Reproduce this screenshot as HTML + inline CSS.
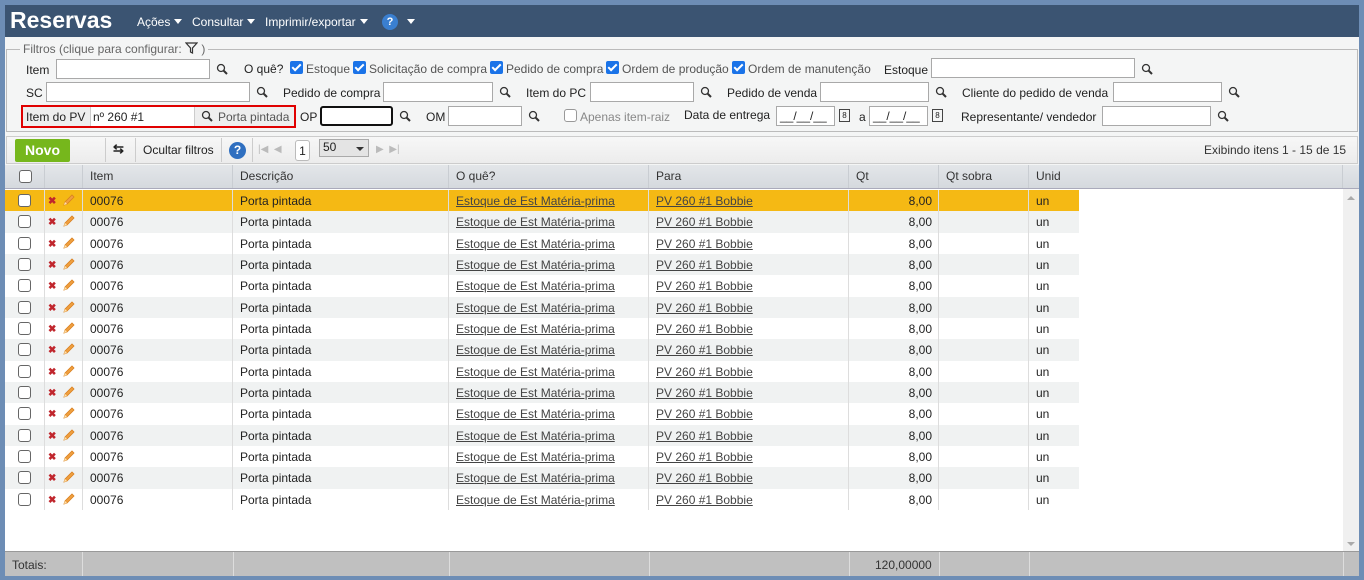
<!DOCTYPE html>
<html><head><meta charset="utf-8"><style>
*{box-sizing:border-box;margin:0;padding:0}
body{width:1364px;height:580px;background:#6d8db5;font-family:"Liberation Sans",sans-serif;font-size:12px;color:#222;position:relative;overflow:hidden}
.a{position:absolute}
#main{left:5px;top:5px;width:1354px;height:571px;background:#f4f5f5}
#hdr{left:5px;top:5px;width:1354px;height:32px;background:#3b5472;color:#fff}
.menu{position:absolute;top:10px;font-size:12px;color:#fff}
.tri{display:inline-block;width:0;height:0;border-left:4px solid transparent;border-right:4px solid transparent;border-top:5px solid #fff;vertical-align:2px;margin-left:4px}
.inp{position:absolute;height:20px;background:#fff;border:1px solid #a9a9a9}
.lbl{position:absolute;font-size:12px;color:#222}
.mag{position:absolute;width:12px;height:12px}
.cb{position:absolute;width:13px;height:13px;background:#1a73e8;border-radius:2px}
.cb:after{content:"";position:absolute;left:4px;top:1px;width:3px;height:7px;border:solid #fff;border-width:0 2px 2px 0;transform:rotate(45deg)}
.cbt{position:absolute;font-size:12px;color:#555}
.row{position:absolute;left:5px;width:1074px;height:21.33px}
.row div{position:absolute;top:0;height:100%;line-height:22px;border-right:1px solid #ddd}
.ch{position:absolute;width:13px;height:13px;border:1px solid #666;border-radius:3px;background:#fff}
a{color:#444;text-decoration:underline}
.hc{position:absolute;top:0;height:23px;line-height:23px;border-right:1px solid #c9cdd2;padding-left:7px;color:#333}
</style></head><body>
<div id="main" class="a"></div>
<div id="hdr" class="a">
<div class="a" style="left:5px;top:2px;font-size:23px;font-weight:bold;">Reservas</div>
<div class="menu" style="left:132px">Ações<span class="tri"></span></div>
<div class="menu" style="left:187px">Consultar<span class="tri"></span></div>
<div class="menu" style="left:260px">Imprimir/exportar<span class="tri"></span></div>
<div class="a" style="left:377px;top:9px;width:16px;height:16px;border-radius:50%;background:#3a7fd0;color:#fff;font-size:11px;font-weight:bold;text-align:center;line-height:16px">?</div>
<div class="a" style="left:402px;top:14px;border-left:4px solid transparent;border-right:4px solid transparent;border-top:5px solid #fff"></div>
</div>
<div class="a" style="left:6px;top:49px;width:1352px;height:83px;border:1px solid #bbb"></div>
<div class="a" style="left:20px;top:42px;background:#f4f5f5;padding:0 3px;color:#666;font-size:12px">Filtros (clique para configurar: <svg width="13" height="12" viewBox="0 0 13 12" style="vertical-align:-1px"><path d="M1 1H12L7.5 6V11L5.5 10V6Z" fill="none" stroke="#333" stroke-width="1.2"/></svg> )</div>
<svg width="0" height="0" style="position:absolute"><defs><g id="m"><circle cx="5" cy="5" r="3.5" fill="none" stroke="#333" stroke-width="1.3"/><path d="M7.5 7.5L11 11" stroke="#333" stroke-width="2"/></g>
<g id="p"><path d="M2 12L3 9L10 2L12 4L5 11Z" fill="#f0a040" stroke="#d98020" stroke-width="0.8"/><path d="M2 12L3 9L5 11Z" fill="#fde3b0"/></g></defs></svg>
<div class="lbl" style="left:26px;top:63px">Item</div>
<div class="inp" style="left:56px;top:59px;width:154px"></div>
<svg class="mag" style="left:216px;top:63px"><use href="#m"/></svg>
<div class="lbl" style="left:244px;top:62px">O quê?</div>
<div class="cb" style="left:290px;top:61px"></div><div class="cbt" style="left:306px;top:62px">Estoque</div>
<div class="cb" style="left:353px;top:61px"></div><div class="cbt" style="left:369px;top:62px">Solicitação de compra</div>
<div class="cb" style="left:490px;top:61px"></div><div class="cbt" style="left:506px;top:62px">Pedido de compra</div>
<div class="cb" style="left:606px;top:61px"></div><div class="cbt" style="left:622px;top:62px">Ordem de produção</div>
<div class="cb" style="left:732px;top:61px"></div><div class="cbt" style="left:748px;top:62px">Ordem de manutenção</div>
<div class="lbl" style="left:884px;top:63px">Estoque</div>
<div class="inp" style="left:931px;top:58px;width:204px"></div>
<svg class="mag" style="left:1141px;top:63px"><use href="#m"/></svg>
<div class="lbl" style="left:26px;top:86px">SC</div>
<div class="inp" style="left:46px;top:82px;width:204px"></div>
<svg class="mag" style="left:256px;top:86px"><use href="#m"/></svg>
<div class="lbl" style="left:283px;top:86px">Pedido de compra</div>
<div class="inp" style="left:383px;top:82px;width:110px"></div>
<svg class="mag" style="left:499px;top:86px"><use href="#m"/></svg>
<div class="lbl" style="left:526px;top:86px">Item do PC</div>
<div class="inp" style="left:590px;top:82px;width:104px"></div>
<svg class="mag" style="left:700px;top:86px"><use href="#m"/></svg>
<div class="lbl" style="left:727px;top:86px">Pedido de venda</div>
<div class="inp" style="left:820px;top:82px;width:109px"></div>
<svg class="mag" style="left:935px;top:86px"><use href="#m"/></svg>
<div class="lbl" style="left:962px;top:86px">Cliente do pedido de venda</div>
<div class="inp" style="left:1113px;top:82px;width:109px"></div>
<svg class="mag" style="left:1228px;top:86px"><use href="#m"/></svg>
<div class="a" style="left:21px;top:105px;width:275px;height:23px;border:2px solid #e00000;background:#eee"></div>
<div class="lbl" style="left:26px;top:110px">Item do PV</div>
<div class="a" style="left:90px;top:107px;width:105px;height:19px;background:#fff;border-left:1px solid #ccc;border-right:1px solid #ccc;padding:3px 2px">nº 260 #1</div>
<svg class="mag" style="left:201px;top:110px"><use href="#m"/></svg>
<div class="lbl" style="left:218px;top:110px;color:#555">Porta pintada</div>
<div class="lbl" style="left:300px;top:110px">OP</div>
<div class="a" style="left:320px;top:106px;width:73px;height:20px;border:2px solid #111;border-radius:3px;background:#fff"></div>
<svg class="mag" style="left:399px;top:110px"><use href="#m"/></svg>
<div class="lbl" style="left:426px;top:110px">OM</div>
<div class="inp" style="left:448px;top:106px;width:74px"></div>
<svg class="mag" style="left:528px;top:110px"><use href="#m"/></svg>
<div class="a" style="left:564px;top:109px;width:13px;height:13px;border:1px solid #999;border-radius:3px;background:#fff"></div>
<div class="cbt" style="left:580px;top:110px;color:#888">Apenas item-raiz</div>
<div class="lbl" style="left:684px;top:108px">Data de entrega</div>
<div class="inp" style="left:776px;top:106px;width:59px;padding:2px 3px">__/__/__</div>
<div class="a" style="left:839px;top:109px;width:11px;height:13px;border:1px solid #444;font-size:8px;text-align:center;line-height:11px">8</div>
<div class="lbl" style="left:859px;top:110px">a</div>
<div class="inp" style="left:869px;top:106px;width:59px;padding:2px 3px">__/__/__</div>
<div class="a" style="left:932px;top:109px;width:11px;height:13px;border:1px solid #444;font-size:8px;text-align:center;line-height:11px">8</div>
<div class="lbl" style="left:961px;top:110px">Representante/ vendedor</div>
<div class="inp" style="left:1102px;top:106px;width:109px"></div>
<svg class="mag" style="left:1217px;top:110px"><use href="#m"/></svg>
<div class="a" style="left:6px;top:136px;width:1352px;height:28px;background:linear-gradient(#f7f7f7,#ececec);border:1px solid #ccc"></div>
<div class="a" style="left:15px;top:139px;width:55px;height:23px;background:#76b71c;border-radius:2px;color:#fff;font-weight:bold;font-size:14px;text-align:center;line-height:23px">Novo</div>
<div class="a" style="left:105px;top:138px;width:1px;height:24px;background:#ccc"></div>
<div class="a" style="left:113px;top:141px;font-weight:bold;font-size:13px">⇆</div>
<div class="a" style="left:135px;top:138px;width:1px;height:24px;background:#ccc"></div>
<div class="a" style="left:143px;top:143px">Ocultar filtros</div>
<div class="a" style="left:221px;top:138px;width:1px;height:24px;background:#ccc"></div>
<div class="a" style="left:229px;top:142px;width:17px;height:17px;border-radius:50%;background:#2f6fc0;color:#fff;font-weight:bold;text-align:center;line-height:17px">?</div>
<div class="a" style="left:252px;top:138px;width:1px;height:24px;background:#ccc"></div>
<div class="a" style="left:258px;top:144px;color:#bbb;font-size:10px">|◀ &nbsp;◀</div>
<div class="a" style="left:295px;top:140px;width:15px;height:21px;border:1px solid #bbb;border-radius:3px;background:#fff;text-align:center;line-height:20px">1</div>
<div class="a" style="left:319px;top:139px;width:50px;height:18px;border:1px solid #aaa;background:#e4e4e4;padding-left:3px;line-height:14px">50<span class="a" style="left:36px;top:7px;border-left:4px solid transparent;border-right:4px solid transparent;border-top:4px solid #333"></span></div>
<div class="a" style="left:376px;top:144px;color:#bbb;font-size:10px">▶ &nbsp;▶|</div>
<div class="a" style="left:1204px;top:143px;color:#333">Exibindo itens 1 - 15 de 15</div>
<div class="a" style="left:5px;top:165px;width:1354px;height:387px;background:#fff"></div>
<div class="a" style="left:5px;top:165px;width:1354px;height:24px;background:linear-gradient(#e3e6e9,#d5d9de);border-bottom:1px solid #aab">
<div class="hc" style="left:0;width:40px"><div class="ch" style="left:14px;top:5px"></div></div>
<div class="hc" style="left:40px;width:38px"></div>
<div class="hc" style="left:78px;width:150px">Item</div>
<div class="hc" style="left:228px;width:216px">Descrição</div>
<div class="hc" style="left:444px;width:200px">O quê?</div>
<div class="hc" style="left:644px;width:200px">Para</div>
<div class="hc" style="left:844px;width:90px">Qt</div>
<div class="hc" style="left:934px;width:90px">Qt sobra</div>
<div class="hc" style="left:1024px;width:314px">Unid</div>
</div>
<div class="a" style="left:1343px;top:189px;width:16px;height:363px;background:#f0f0f0"><div class="a" style="left:4px;top:7px;border-left:4px solid transparent;border-right:4px solid transparent;border-bottom:4px solid #aaa"></div><div class="a" style="left:4px;bottom:6px;border-left:4px solid transparent;border-right:4px solid transparent;border-top:4px solid #aaa"></div></div>
<div id="rows"></div>
<script>
var h='';for(var i=0;i<15;i++){var bg=i==0?'#f5b914':(i%2?'#f0f2f2':'#fff');var t=190+i*21.33;
h+='<div class="row" style="top:'+t+'px;background:'+bg+'">'+
'<div style="left:0;width:40px"><span class="ch" style="left:13px;top:4px"></span></div>'+
'<div style="left:40px;width:38px"><span style="position:absolute;left:3px;top:1px;color:#c0262d;font-size:10px;font-weight:bold">✖</span><svg style="position:absolute;left:17px;top:3px" width="14" height="14"><use href="#p"/></svg></div>'+
'<div style="left:78px;width:150px;padding-left:7px">00076</div>'+
'<div style="left:228px;width:216px;padding-left:7px">Porta pintada</div>'+
'<div style="left:444px;width:200px;padding-left:7px"><a>Estoque de Est Matéria-prima</a></div>'+
'<div style="left:644px;width:200px;padding-left:7px"><a>PV 260 #1 Bobbie</a></div>'+
'<div style="left:844px;width:90px;text-align:right;padding-right:6px">8,00</div>'+
'<div style="left:934px;width:90px"></div>'+
'<div style="left:1024px;width:50px;padding-left:7px;border-right:0">un</div></div>';}
document.getElementById('rows').innerHTML=h;
</script>
<div class="a" style="left:5px;top:551px;width:1354px;height:25px;background:#c0c0c0;border-top:1px solid #999">
<div class="a" style="left:7px;top:6px;color:#333">Totais:</div>
<div class="a" style="left:77px;top:0;width:1px;height:24px;background:#ddd"></div>
<div class="a" style="left:228px;top:0;width:1px;height:24px;background:#ddd"></div>
<div class="a" style="left:444px;top:0;width:1px;height:24px;background:#ddd"></div>
<div class="a" style="left:644px;top:0;width:1px;height:24px;background:#ddd"></div>
<div class="a" style="left:844px;top:0;width:1px;height:24px;background:#ddd"></div>
<div class="a" style="left:870px;top:6px;color:#333">120,00000</div>
<div class="a" style="left:934px;top:0;width:1px;height:24px;background:#ddd"></div>
<div class="a" style="left:1024px;top:0;width:1px;height:24px;background:#ddd"></div>
<div class="a" style="left:1338px;top:0;width:1px;height:24px;background:#ddd"></div>
</div>
</body></html>
